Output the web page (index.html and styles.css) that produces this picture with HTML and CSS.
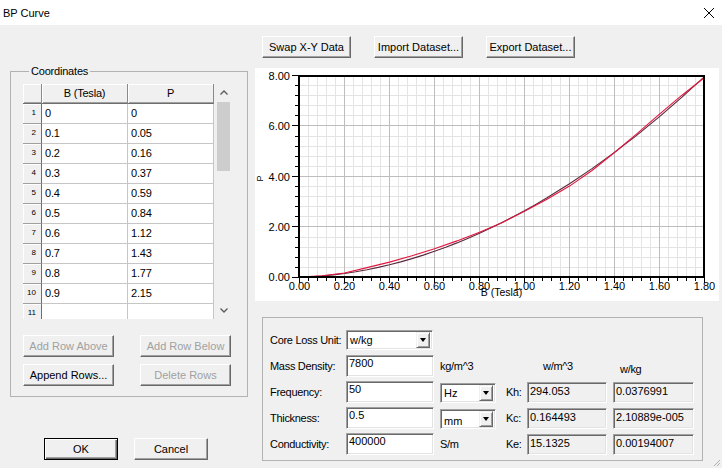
FILE: index.html
```html
<!DOCTYPE html>
<html lang="en">
<head>
<meta charset="utf-8">
<title>BP Curve</title>
<link rel="stylesheet" href="styles.css">
</head>
<body>
<div class="window">
  <header class="titlebar">
    <span class="title">BP Curve</span>
    <svg class="close" width="10" height="10" viewBox="0 0 10 10"><path d="M0 0L10 10M10 0L0 10" stroke="#000" stroke-width="1" fill="none"/></svg>
  </header>
  <main class="content">
    <section class="left">
      <fieldset class="group coords">
        <legend>Coordinates</legend>
        <div class="gridwidget">
          <div class="sheet">
            <div class="corner"></div><div class="colhead">B (Tesla)</div><div class="colhead">P</div>
            <div class="rowhead">1</div><div class="cell">0</div><div class="cell">0</div>
            <div class="rowhead">2</div><div class="cell">0.1</div><div class="cell">0.05</div>
            <div class="rowhead">3</div><div class="cell">0.2</div><div class="cell">0.16</div>
            <div class="rowhead">4</div><div class="cell">0.3</div><div class="cell">0.37</div>
            <div class="rowhead">5</div><div class="cell">0.4</div><div class="cell">0.59</div>
            <div class="rowhead">6</div><div class="cell">0.5</div><div class="cell">0.84</div>
            <div class="rowhead">7</div><div class="cell">0.6</div><div class="cell">1.12</div>
            <div class="rowhead">8</div><div class="cell">0.7</div><div class="cell">1.43</div>
            <div class="rowhead">9</div><div class="cell">0.8</div><div class="cell">1.77</div>
            <div class="rowhead">10</div><div class="cell">0.9</div><div class="cell">2.15</div>
            <div class="rowhead">11</div><div class="cell"></div><div class="cell"></div>
          </div>
          <div class="vscroll">
            <div class="sbtn"><svg width="8" height="5" viewBox="0 0 8 5"><path d="M0.5 4.5L4 1L7.5 4.5" stroke="#5a5a5a" stroke-width="1.3" fill="none"/></svg></div>
            <div class="track"><div class="thumb"></div></div>
            <div class="sbtn"><svg width="8" height="5" viewBox="0 0 8 5"><path d="M0.5 0.5L4 4L7.5 0.5" stroke="#5a5a5a" stroke-width="1.3" fill="none"/></svg></div>
          </div>
        </div>
        <div class="rowbtns">
          <button class="btn" disabled>Add Row Above</button>
          <button class="btn" disabled>Add Row Below</button>
          <button class="btn">Append Rows...</button>
          <button class="btn" disabled>Delete Rows</button>
        </div>
      </fieldset>
      <div class="okrow">
        <button class="btn dlg default">OK</button>
        <button class="btn dlg">Cancel</button>
      </div>
    </section>

    <section class="right">
      <div class="toolbar">
        <button class="btn tb">Swap X-Y Data</button>
        <button class="btn tb">Import Dataset...</button>
        <button class="btn tb">Export Dataset...</button>
      </div>
      <div class="chart">
        <svg class="plot" width="464" height="233" viewBox="0 0 464 233">
          <defs>
            <pattern id="vminor" x="44" y="0" width="9" height="10" patternUnits="userSpaceOnUse"><rect width="1" height="10" fill="#e4e4e4"/></pattern>
            <pattern id="vmajor" x="44" y="0" width="45" height="10" patternUnits="userSpaceOnUse"><rect width="1" height="10" fill="#bdbdbd"/></pattern>
            <pattern id="xtick" x="44" y="0" width="9" height="10" patternUnits="userSpaceOnUse"><rect width="1" height="10" fill="#000"/></pattern>
          </defs>
          <rect x="44" y="7" width="406" height="202" fill="url(#vminor)"/>
          <path d="M44 17.5H449M44 27.5H449M44 37.5H449M44 47.5H449M44 68.5H449M44 78.5H449M44 88.5H449M44 98.5H449M44 118.5H449M44 128.5H449M44 138.5H449M44 148.5H449M44 169.5H449M44 179.5H449M44 189.5H449M44 199.5H449" stroke="#e4e4e4" stroke-width="1" fill="none"/>
          <rect x="44" y="7" width="406" height="202" fill="url(#vmajor)"/>
          <path d="M44 57.5H449M44 108.5H449M44 158.5H449" stroke="#bdbdbd" stroke-width="1" fill="none"/>
          <rect x="44" y="210" width="406" height="3" fill="url(#xtick)"/>
          <path d="M44.5 209V215M89.5 209V215M134.5 209V215M179.5 209V215M224.5 209V215M269.5 209V215M314.5 209V215M359.5 209V215M404.5 209V215M449.5 209V215" stroke="#000" stroke-width="1" fill="none"/>
          <path d="M40 17.5H44M40 27.5H44M40 37.5H44M40 47.5H44M40 68.5H44M40 78.5H44M40 88.5H44M40 98.5H44M40 118.5H44M40 128.5H44M40 138.5H44M40 148.5H44M40 169.5H44M40 179.5H44M40 189.5H44M40 199.5H44M37 7.5H44M37 57.5H44M37 108.5H44M37 158.5H44M37 209.5H44" stroke="#000" stroke-width="1" fill="none"/>
          <g transform="translate(44.5 209) scale(225 -25.25)">
            <polyline class="fit" points="0,0 0.05,0.0125 0.1,0.041 0.15,0.0835 0.2,0.139 0.25,0.207 0.3,0.287 0.35,0.38 0.4,0.484 0.45,0.6 0.5,0.727 0.55,0.866 0.6,1.017 0.65,1.178 0.7,1.351 0.75,1.536 0.8,1.731 0.85,1.938 0.9,2.156 0.95,2.384 1,2.624 1.05,2.875 1.1,3.136 1.2,3.692 1.3,4.292 1.4,4.935 1.5,5.621 1.6,6.35 1.7,7.121 1.8,7.936"/>
            <polyline class="data" points="0,0 0.1,0.05 0.2,0.16 0.3,0.37 0.4,0.59 0.5,0.84 0.6,1.12 0.7,1.43 0.8,1.77 0.9,2.15 1,2.6 1.1,3.08 1.2,3.6 1.3,4.22 1.4,4.93 1.5,5.68 1.6,6.45 1.7,7.2 1.8,7.9"/>
          </g>
          <rect x="44" y="8" width="405" height="201" fill="none" stroke="#000" stroke-width="2"/>
          <g class="ticklabels">
            <text x="35" y="11.5" text-anchor="end">8.00</text>
            <text x="35" y="61.5" text-anchor="end">6.00</text>
            <text x="35" y="112.5" text-anchor="end">4.00</text>
            <text x="35" y="162.5" text-anchor="end">2.00</text>
            <text x="35" y="213" text-anchor="end">0.00</text>
            <text x="44.5" y="222" text-anchor="middle">0.00</text>
            <text x="89.5" y="222" text-anchor="middle">0.20</text>
            <text x="134.5" y="222" text-anchor="middle">0.40</text>
            <text x="179.5" y="222" text-anchor="middle">0.60</text>
            <text x="224.5" y="222" text-anchor="middle">0.80</text>
            <text x="269.5" y="222" text-anchor="middle">1.00</text>
            <text x="314.5" y="222" text-anchor="middle">1.20</text>
            <text x="359.5" y="222" text-anchor="middle">1.40</text>
            <text x="404.5" y="222" text-anchor="middle">1.60</text>
            <text x="449.5" y="222" text-anchor="middle">1.80</text>
          </g>
          <text class="axislabel" x="246.5" y="227.5" text-anchor="middle">B (Tesla)</text>
          <text class="axislabel ylab" transform="translate(8 110.5) rotate(-90)" text-anchor="middle">P</text>
        </svg>
      </div>
      <div class="group loss">
        <span class="lbl c1">Core Loss Unit:</span>
        <div class="select unitsel"><span class="seltext">w/kg</span><span class="dd"><i class="tri"></i></span></div>

        <span class="lbl c1">Mass Density:</span>
        <div class="field">7800</div>
        <span class="lbl">kg/m^3</span>
        <span class="lbl hdr c5">w/m^3</span>
        <span class="lbl hdr2">w/kg</span>

        <span class="lbl c1">Frequency:</span>
        <div class="field">50</div>
        <div class="select small"><span class="seltext">Hz</span><span class="dd"><i class="tri"></i></span></div>
        <span class="lbl">Kh:</span>
        <div class="ro w80">294.053</div>
        <div class="ro w81">0.0376991</div>

        <span class="lbl c1">Thickness:</span>
        <div class="field">0.5</div>
        <div class="select small"><span class="seltext low">mm</span><span class="dd"><i class="tri"></i></span></div>
        <span class="lbl">Kc:</span>
        <div class="ro w80">0.164493</div>
        <div class="ro w81">2.10889e-005</div>

        <span class="lbl c1">Conductivity:</span>
        <div class="field">400000</div>
        <span class="lbl">S/m</span>
        <span class="lbl">Ke:</span>
        <div class="ro w80">15.1325</div>
        <div class="ro w81">0.00194007</div>
      </div>
    </section>
  </main>
  <svg class="grip" width="10" height="10" viewBox="0 0 10 10"><path d="M9 3L3 9M9 6L6 9" stroke="#b0b0b0" stroke-width="1" fill="none"/></svg>
</div>
</body>
</html>
```

FILE: styles.css
```css
* { box-sizing: border-box; }
html, body { margin: 0; padding: 0; }
body {
  width: 722px;
  height: 468px;
  overflow: hidden;
  background: #f0f0f0;
  font-family: "Liberation Sans", Arial, sans-serif;
  font-size: 11px;
  color: #000;
}
.window { position: relative; width: 722px; height: 468px; }

.titlebar {
  height: 25px;
  background: #fff;
  display: flex;
  align-items: center;
  justify-content: space-between;
  padding: 0 8px 0 3px;
}
.title { font-size: 11px; }
.close { display: block; }

.content { display: flex; padding-left: 10px; }
.left { width: 238px; display: flex; flex-direction: column; }
.right { width: 464px; margin-left: 7px; display: flex; flex-direction: column; }

.group { border: 1px solid #b2b2b2; }

.coords {
  margin: 39px 0 0;
  padding: 6px 12px 10px;
  min-width: 0;
}
.coords legend {
  padding: 0 2px;
  margin-left: 6px;
  line-height: 14px;
  letter-spacing: -0.2px;
}

.gridwidget { display: flex; height: 235px; }
.sheet {
  width: 191px;
  display: grid;
  grid-template-columns: 19px 86px 86px;
  grid-auto-rows: 20px;
  align-content: start;
  overflow: hidden;
  background: #fff;
}
.cell {
  border-right: 1px solid #c6c6c6;
  border-bottom: 1px solid #c6c6c6;
  padding-left: 3px;
  line-height: 19px;
  white-space: nowrap;
  letter-spacing: -0.2px;
}
.rowhead {
  background: #f0f0f0;
  border-right: 1px solid #6e6e6e;
  border-bottom: 1px solid #a0a0a0;
  box-shadow: inset 1px 1px #fff;
  font-size: 8px;
  line-height: 10px;
  text-align: right;
  padding: 4px 5px 0 0;
}
.corner, .colhead {
  background: #f0f0f0;
  border-right: 1px solid #8a8a8a;
  border-bottom: 1px solid #6e6e6e;
  box-shadow: inset 1px 1px #fff, inset 0 -1px #a0a0a0;
}
.colhead { text-align: center; line-height: 19px; letter-spacing: -0.2px; }

.vscroll {
  width: 17px;
  margin-left: 1px;
  display: flex;
  flex-direction: column;
  background: #f0f0f0;
}
.sbtn { height: 17px; display: flex; align-items: center; justify-content: center; }
.sbtn svg { display: block; }
.track { flex: 1; padding: 1px 2px; }
.thumb { height: 69px; background: #cdcdcd; }

.btn {
  font-family: "Liberation Sans", Arial, sans-serif;
  font-size: 11px;
  height: 22px;
  padding: 0;
  margin: 0;
  color: #000;
  background: #f0f0f0;
  border: 1px solid;
  border-color: #fff #696969 #696969 #fff;
  box-shadow: inset -1px -1px #a0a0a0;
  display: flex;
  align-items: center;
  justify-content: center;
  white-space: nowrap;
}
.btn:disabled { color: #a0a0a0; }

.rowbtns {
  display: grid;
  grid-template-columns: 91px 91px;
  column-gap: 26px;
  row-gap: 7px;
  margin-top: 16px;
}
.okrow { display: flex; gap: 16px; margin-top: 41px; padding-left: 34px; }
.btn.dlg { width: 74px; }
.btn.default {
  border-color: #000;
  box-shadow: inset 1px 1px #fff, inset -1px -1px #696969, inset -2px -2px #a0a0a0;
}

.toolbar { display: flex; gap: 23px; margin: 11px 0 0 7px; }
.btn.tb { width: 89px; }

.chart { margin-top: 10px; width: 464px; height: 233px; background: #fff; }
.plot { display: block; }
.plot .fit, .plot .data { fill: none; stroke-width: 1.1; vector-effect: non-scaling-stroke; stroke-linejoin: round; }
.plot .fit { stroke: #5a2a3c; }
.plot .data { stroke: #e2163f; }
.ticklabels text { font-family: "Liberation Sans", Arial, sans-serif; font-size: 11px; fill: #000; }
.axislabel { font-family: "Liberation Sans", Arial, sans-serif; font-size: 10.5px; fill: #000; }
.axislabel.ylab { font-size: 9px; }

.loss {
  margin: 16px 0 0 7px;
  width: 441px;
  height: 144px;
  padding: 11px 8px 0 7px;
  display: grid;
  grid-template-columns: 76px 94px 66px 21px 86px 81px;
  grid-template-rows: repeat(5, 22px);
  row-gap: 4px;
  align-items: center;
}
.c1 { grid-column: 1; }
.c5 { grid-column: 5; }
.lbl { letter-spacing: -0.3px; white-space: nowrap; }
.hdr { padding-left: 16px; }
.hdr2 { padding-left: 7px; padding-top: 5px; }

.field, .select, .ro {
  border: 1px solid;
  border-color: #a0a0a0 #fff #fff #a0a0a0;
  box-shadow: inset 1px 1px #696969, inset -1px -1px #e3e3e3;
}
.field {
  width: 88px;
  height: 22px;
  background: #fff;
  padding: 1px 0 0 2px;
  line-height: 13px;
}
.select {
  height: 20px;
  background: #fff;
  display: flex;
  align-items: center;
  justify-content: space-between;
  padding: 2px 2px 2px 3px;
}
.unitsel { width: 87px; }
.select.small { width: 56px; align-self: end; }
.seltext { line-height: 13px; }
.seltext.low { padding-top: 4px; }
.dd {
  width: 14px;
  height: 16px;
  background: #f0f0f0;
  border: 1px solid;
  border-color: #f0f0f0 #696969 #696969 #f0f0f0;
  box-shadow: inset 1px 1px #fff, inset -1px -1px #a0a0a0;
  display: flex;
  align-items: center;
  justify-content: center;
}
.tri {
  display: block;
  width: 0;
  height: 0;
  border-left: 3.5px solid transparent;
  border-right: 3.5px solid transparent;
  border-top: 4px solid #000;
}
.ro {
  height: 21px;
  background: #f0f0f0;
  padding: 1px 0 0 2px;
  line-height: 14px;
  white-space: nowrap;
}
.w80 { width: 80px; }
.w81 { width: 81px; }

.grip { position: absolute; right: 1px; bottom: 1px; }
```
